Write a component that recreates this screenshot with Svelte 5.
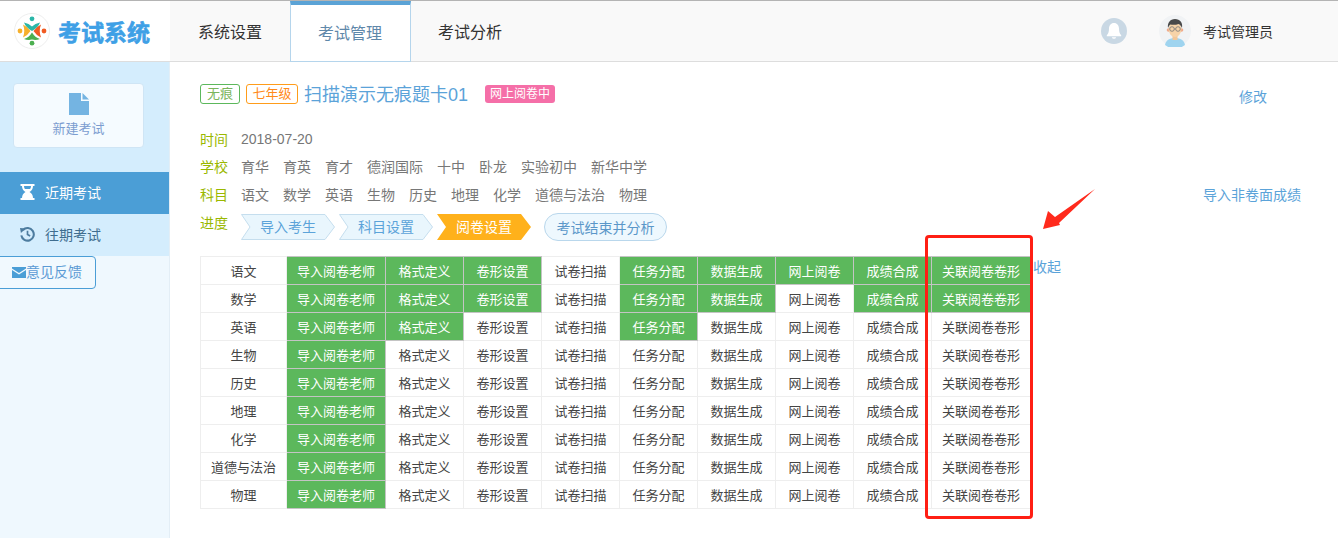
<script lang="ts">
  const tabs = ['系统设置', '考试管理', '考试分析'];
  const schools = ['育华', '育英', '育才', '德润国际', '十中', '卧龙', '实验初中', '新华中学'];
  const subjects = ['语文', '数学', '英语', '生物', '历史', '地理', '化学', '道德与法治', '物理'];
  const steps = [
    { label: '导入考生', active: false },
    { label: '科目设置', active: false },
    { label: '阅卷设置', active: true },
  ];
  const tasks = ['导入阅卷老师', '格式定义', '卷形设置', '试卷扫描', '任务分配', '数据生成', '网上阅卷', '成绩合成', '关联阅卷卷形'];

  // how far each subject got: task indexes shown in green
  function doneTasks(row: number): number[] {
    if (row === 0) return [0, 1, 2, 4, 5, 6, 7, 8];
    if (row === 1) return [0, 1, 2, 4, 5, 7, 8];
    if (row === 2) return [0, 1, 4];
    return [0];
  }
</script>

<div class="page">
  <header class="topbar">
    <div class="brand">
      <svg class="logo" viewBox="0 0 36 36" aria-hidden="true">
        <circle cx="18" cy="18" r="17.500" fill="#fff" stroke="#eeeeee" />
        <circle cx="18" cy="5.800" r="2.400" fill="#2bb6a8" />
        <path d="M10 9.500Q15 10.500 18 13.500 21 10.500 26 9.500 24 15 18 18 12 15 10 9.500z" fill="#2bb6a8" />
        <circle cx="6" cy="18" r="2.400" fill="#f6b02c" />
        <path d="M9 11.500Q14 14 16.500 18 14 22 9 24.500 11.500 18 9 11.500z" fill="#f6b02c" />
        <circle cx="30" cy="18" r="2.400" fill="#f15a22" />
        <path d="M27 11.500Q22 14 19.500 18 22 22 27 24.500 24.500 18 27 11.500z" fill="#f15a22" />
        <circle cx="18" cy="30.200" r="2.400" fill="#4caf50" />
        <path d="M10 26Q15 24.500 18 19.500 21 24.500 26 26 22 27.500 18 26.500 14 27.500 10 26z" fill="#4caf50" />
      </svg>
      <span class="brand-name">考试系统</span>
    </div>
    <nav class="tabs">
      {#each tabs as tab, i}
        <span class="tab" class:current={i === 1}>{tab}</span>
      {/each}
    </nav>
    <div class="user">
      <svg class="bell" viewBox="0 0 26 26" aria-hidden="true">
        <circle cx="13" cy="13" r="13" fill="#c9d8e4" />
        <path d="M13 5c-3.200 0-5 2.600-5 5.600 0 3.400-.7 5.200-2.200 6.700v.9h14.400v-.9c-1.500-1.500-2.200-3.300-2.200-6.700C18 7.600 16.200 5 13 5z" fill="#fff" />
        <path d="M10.800 19.200a2.300 2.300 0 0 0 4.400 0z" fill="#fff" />
      </svg>
      <svg class="avatar" viewBox="0 0 32 32" aria-hidden="true">
        <circle cx="16" cy="16" r="16" fill="#f1f3f5" />
        <path d="M6 30c.6-4.500 4.500-7 10-7s9.400 2.500 10 7a16 16 0 0 1-20 0z" fill="#9fd4ef" />
        <rect x="13.500" y="19" width="5" height="6" fill="#f2c79a" />
        <circle cx="9.500" cy="15" r="1.800" fill="#f0a98a" />
        <circle cx="22.500" cy="15" r="1.800" fill="#f0a98a" />
        <ellipse cx="16" cy="14.500" rx="6.300" ry="7.500" fill="#f7d3a8" />
        <path d="M9 13c-.8-5 2-9 7-9s8 3.500 7 9c-1-2-2-3.500-3.500-4-2.500 1-6 1-8 .5C10.500 10 9.500 11.500 9 13z" fill="#4a4a4a" />
        <circle cx="13" cy="14" r="2.300" fill="none" stroke="#777" stroke-width="0.800" />
        <circle cx="19" cy="14" r="2.300" fill="none" stroke="#777" stroke-width="0.800" />
        <path d="M15.300 14h1.400" stroke="#777" stroke-width="0.800" />
      </svg>
      <span class="user-name">考试管理员</span>
    </div>
  </header>

  <div class="body">
    <aside class="sidebar">
      <div class="side-top">
        <div class="new-exam">
          <svg class="doc" viewBox="0 0 20 22" aria-hidden="true">
            <path d="M0 0h12v8h8v14H0z" fill="#74b4e2" />
            <path d="M13.500 0 20 6.500h-6.500z" fill="#74b4e2" />
          </svg>
          <span>新建考试</span>
        </div>
        <div class="menu-item current">
          <svg viewBox="0 0 14 16" aria-hidden="true">
            <path d="M0 0h14v2h-1.500c0 3-1.500 4.800-3.500 6 2 1.200 3.500 3 3.500 6H14v2H0v-2h1.500c0-3 1.500-4.800 3.500-6-2-1.200-3.500-3-3.500-6H0z" fill="#fff" />
            <path d="M3.500 2h7c0 1.200-.3 2.200-.9 3H4.400c-.6-.8-.9-1.800-.9-3z" fill="#4b9ed6" />
          </svg>
          近期考试
        </div>
        <div class="menu-item">
          <svg viewBox="0 0 16 16" aria-hidden="true">
            <path d="M3.200 3.700A6.700 6.700 0 1 1 1.400 9.500" fill="none" stroke="#4d7c9f" stroke-width="2.200" />
            <path d="M0 1.500 6.200 2 1 7z" fill="#4d7c9f" />
            <path d="M8 4.500v4l2.800 1.600" fill="none" stroke="#4d7c9f" stroke-width="1.800" />
          </svg>
          往期考试
        </div>
      </div>
      <button type="button" class="feedback">
        <svg viewBox="0 0 14 11" aria-hidden="true">
          <path d="M0 0h14v1.500L7 6 0 1.500z" fill="#4b9ed6" />
          <path d="M0 3l7 4.500L14 3v8H0z" fill="#4b9ed6" />
        </svg>意见反馈
      </button>
    </aside>

    <main class="content">
      <div class="title-row">
        <span class="tag green">无痕</span>
        <span class="tag orange">七年级</span>
        <span class="title">扫描演示无痕题卡01</span>
        <span class="status">网上阅卷中</span>
        <a class="edit">修改</a>
      </div>

      <div class="info">
        <div class="line first">
          <span class="key">时间</span>
          <span class="vals">2018-07-20</span>
        </div>
        <div class="line">
          <span class="key">学校</span>
          <span class="vals">
            {#each schools as s}<span>{s}</span>{/each}
          </span>
        </div>
        <div class="line">
          <span class="key">科目</span>
          <span class="vals">
            {#each subjects as s}<span>{s}</span>{/each}
          </span>
          <a class="import">导入非卷面成绩</a>
        </div>
        <div class="progress">
          <span class="key">进度</span>
          <div class="steps">
            {#each steps as step, i}
              <div class="step" class:active={step.active}>
                <svg viewBox="0 0 94 26" preserveAspectRatio="none" aria-hidden="true">
                  {#if step.active}
                    <polygon points="0,0 84,0 94,13 84,26 0,26 9,13" fill="#ffb11b" />
                  {:else}
                    <polygon points="0.500,0.500 84,0.500 93.500,13 84,25.500 0.500,25.500 9,13" fill="#e9f6fd" stroke="#c5deee" />
                  {/if}
                </svg>
                <span>{step.label}</span>
              </div>
            {/each}
            <span class="finish">考试结束并分析</span>
          </div>
        </div>
      </div>

      <div class="table-wrap">
        <table>
          <colgroup>
            <col style="width:86px" />
            <col style="width:99px" />
            <col style="width:78px" />
            <col style="width:78px" />
            <col style="width:78px" />
            <col style="width:78px" />
            <col style="width:78px" />
            <col style="width:78px" />
            <col style="width:78px" />
            <col style="width:99px" />
          </colgroup>
          <tbody>
            {#each subjects as subject, row}
              <tr>
                <td>{subject}</td>
                {#each tasks as task, col}
                  <td class:done={doneTasks(row).includes(col)}>{task}</td>
                {/each}
              </tr>
            {/each}
          </tbody>
        </table>
        <a class="collapse">收起</a>
      </div>
    </main>
  </div>

  <div class="red-box"></div>
  <svg class="arrow" viewBox="0 0 56 44" aria-hidden="true">
    <polygon points="2,42 7,24 14,30 54,2 18,36 19,38" fill="#ff2a1c" />
  </svg>
</div>

<style>
  :global(body) {
    margin: 0;
    background: #fff;
  }

  .page {
    position: relative;
    width: 1338px;
    height: 538px;
    overflow: hidden;
    font-family: "Liberation Sans", "Noto Sans CJK SC", sans-serif;
    font-size: 14px;
    color: #333;
  }

  .topbar {
    display: flex;
    height: 60px;
    border-top: 1px solid #b4b4b4;
    border-bottom: 1px solid #dddddd;
    background: #f9f9f9;
  }

  .brand {
    display: flex;
    align-items: center;
    gap: 8px;
    width: 156px;
    padding-left: 14px;
    background: #fff;
  }

  .logo {
    width: 36px;
    height: 36px;
    flex: none;
  }

  .brand-name {
    font-size: 23px;
    font-weight: 700;
    color: #3ea0e6;
    -webkit-text-stroke: 0.6px #3ea0e6;
    white-space: nowrap;
  }

  .tabs {
    display: flex;
  }

  .tab {
    display: flex;
    align-items: center;
    padding: 0 28px;
    font-size: 16px;
    color: #333;
  }

  .tab.current {
    margin: 0 -1px -1px 0;
    padding: 0 28px 3px 27px;
    border: 1px solid #b5d5ec;
    border-top: 4px solid #5ba3d6;
    background: #fff;
    color: #5f88aa;
  }

  .user {
    display: flex;
    align-items: center;
    margin-left: auto;
    padding-right: 65px;
  }

  .bell {
    width: 26px;
    height: 26px;
    margin-right: 32px;
  }

  .avatar {
    width: 32px;
    height: 32px;
    margin-right: 12px;
  }

  .user-name {
    font-size: 14px;
    color: #333;
  }

  .body {
    display: flex;
    height: 477px;
  }

  .sidebar {
    flex: none;
    width: 169px;
    border-right: 1px solid #e3eef6;
    background: #eff8fe;
  }

  .side-top {
    box-sizing: border-box;
    height: 194px;
    padding-top: 21px;
    background: #d4edfd;
  }

  .new-exam {
    display: flex;
    flex-direction: column;
    align-items: center;
    box-sizing: border-box;
    width: 131px;
    height: 65px;
    margin: 0 0 24px 13px;
    padding-top: 9px;
    border: 1px solid #cfe5f5;
    border-radius: 4px;
    background: #f5fbff;
    font-size: 13px;
    color: #7c9dd0;
  }

  .doc {
    width: 20px;
    height: 22px;
    margin-bottom: 3px;
  }

  .menu-item {
    display: flex;
    align-items: center;
    box-sizing: border-box;
    height: 42px;
    padding: 0 0 2px 20px;
    color: #3f6d8f;
  }

  .menu-item svg {
    width: 15px;
    height: 16px;
    margin-right: 10px;
  }

  .menu-item.current {
    background: #4b9ed6;
    color: #fff;
  }

  .feedback {
    display: flex;
    align-items: center;
    box-sizing: border-box;
    width: 97px;
    height: 33px;
    margin-left: -1px;
    padding: 0 0 3px 12px;
    border: 1px solid #4b9ed6;
    border-radius: 0 4px 4px 0;
    background: #f1f9fe;
    font: inherit;
    color: #5b9bd5;
  }

  .feedback svg {
    width: 14px;
    height: 11px;
    margin-top: 2px;
  }

  .content {
    flex: 1;
    box-sizing: border-box;
    padding: 22px 37px 0 30px;
  }

  .title-row {
    display: flex;
    align-items: center;
    height: 20px;
  }

  .tag {
    box-sizing: border-box;
    height: 20px;
    border: 1px solid;
    border-radius: 3px;
    font-size: 13px;
    line-height: 18px;
    text-align: center;
    white-space: nowrap;
  }

  .tag.green {
    width: 40px;
    margin-right: 6px;
    border-color: #5cb85c;
    color: #7ab55c;
  }

  .tag.orange {
    width: 52px;
    margin-right: 6px;
    border-color: #ff9c1a;
    color: #ff8a1a;
  }

  .title {
    margin-right: 17px;
    padding-top: 2px;
    font-size: 18px;
    color: #5ba3d9;
    line-height: 19px;
  }

  .status {
    height: 18px;
    padding: 0 5px;
    border-radius: 3px;
    background: #f56fa8;
    font-size: 12px;
    line-height: 18px;
    color: #fff;
  }

  .edit {
    margin-left: auto;
    margin-right: 34px;
    margin-top: 3px;
    color: #5ba3d9;
  }

  .info {
    margin-top: 20px;
  }

  .line {
    display: flex;
    height: 28px;
    align-items: center;
  }

  .line.first {
    box-sizing: border-box;
    padding-top: 1px;
  }

  .key {
    flex: none;
    width: 41px;
    color: #9ab800;
  }

  .vals {
    display: flex;
    gap: 14px;
    color: #777;
  }

  .import {
    margin-left: auto;
    color: #5ba3d9;
  }

  .progress {
    display: flex;
    align-items: flex-start;
    margin-top: 5px;
  }

  .progress .key {
    line-height: 20px;
  }

  .steps {
    display: flex;
    align-items: center;
    gap: 4px;
  }

  .step {
    position: relative;
    display: flex;
    align-items: center;
    justify-content: center;
    box-sizing: border-box;
    width: 94px;
    height: 26px;
    padding-bottom: 2px;
    color: #5ba3d9;
  }

  .step svg {
    position: absolute;
    inset: 0;
    width: 100%;
    height: 100%;
  }

  .step span {
    position: relative;
  }

  .step.active {
    color: #fff;
  }

  .finish {
    box-sizing: border-box;
    width: 123px;
    height: 28px;
    margin-left: 9px;
    border: 1px solid #b9d7ec;
    border-radius: 14px;
    background: #eef8fe;
    line-height: 28px;
    text-align: center;
    color: #5b97c9;
  }

  .table-wrap {
    display: flex;
    margin-top: 15px;
  }

  table {
    width: 830px;
    table-layout: fixed;
    border-collapse: collapse;
    font-size: 13px;
  }

  td {
    box-sizing: border-box;
    height: 28px;
    padding: 0 0 1px;
    border: 1px solid #eeeeee;
    text-align: center;
    color: #444;
  }

  td.done {
    border-color: #c4c4c4;
    background: #5cb85c;
    color: #fff;
  }

  .collapse {
    margin: 1px 0 0 2px;
    line-height: 20px;
    color: #5ba3d9;
  }

  .red-box {
    position: absolute;
    left: 925px;
    top: 235px;
    box-sizing: border-box;
    width: 108px;
    height: 284px;
    border: 3px solid #ff1f14;
    border-radius: 4px;
  }

  .arrow {
    position: absolute;
    left: 1041px;
    top: 187px;
    width: 56px;
    height: 44px;
  }
</style>
